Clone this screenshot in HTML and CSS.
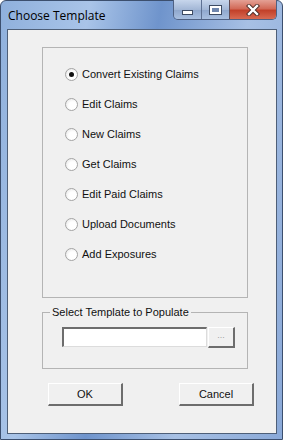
FILE: index.html
```html
<!DOCTYPE html>
<html lang="en">
<head>
  <meta charset="UTF-8">
  <title>Choose Template</title>
  <link rel="stylesheet" href="styles.css">
</head>
<body>
  <div class="window">
    <!-- title bar -->
    <div class="titlebar">
      <div class="title">Choose Template</div>
      <div class="caption-buttons">
        <div class="cap-btn cap-min"><span class="min-glyph"></span></div>
        <div class="cap-btn cap-max"><span class="max-glyph"></span></div>
        <div class="cap-btn cap-close">
          <svg width="14" height="12" viewBox="0 0 14 12">
            <path d="M3 2 L11 10 M11 2 L3 10" stroke="#4a2a25" stroke-width="4.2" stroke-linecap="square"/>
            <path d="M3 2 L11 10 M11 2 L3 10" stroke="#fff" stroke-width="2.4" stroke-linecap="square"/>
          </svg>
        </div>
      </div>
    </div>
    <!-- client area -->
    <div class="client">
      <div class="group options">
        <label class="radio-row"><span class="radio checked"></span>Convert Existing Claims</label>
        <label class="radio-row"><span class="radio"></span>Edit Claims</label>
        <label class="radio-row"><span class="radio"></span>New Claims</label>
        <label class="radio-row"><span class="radio"></span>Get Claims</label>
        <label class="radio-row"><span class="radio"></span>Edit Paid Claims</label>
        <label class="radio-row"><span class="radio"></span>Upload Documents</label>
        <label class="radio-row"><span class="radio"></span>Add Exposures</label>
      </div>
      <fieldset class="group template">
        <legend>Select Template to Populate</legend>
        <div class="file-row">
          <div class="textbox"></div>
          <div class="browse-btn">...</div>
        </div>
      </fieldset>
      <div class="button-row">
        <div class="btn">OK</div>
        <div class="btn">Cancel</div>
      </div>
    </div>
  </div>
</body>
</html>
```

FILE: styles.css
```css
body {
  margin: 0;
  background: #fff;
  font-family: "Liberation Sans", Arial, sans-serif;
  font-size: 11px;
  color: #111;
}
.window {
  width: 283px;
  height: 440px;
  box-sizing: border-box;
  border: 1px solid #3c4f6e;
  border-radius: 6px 6px 0 0;
  background: linear-gradient(100deg, #8fb0dc 0%, #a9c4e8 25%, #6f94cc 45%, #a7c0e4 70%, #8aa9d8 100%);
  display: flex;
  flex-direction: column;
}
/* title bar */
.titlebar {
  height: 28px;
  display: flex;
  justify-content: space-between;
  align-items: flex-start;
}
.title {
  font-family: "Open Sans", "DejaVu Sans", sans-serif;
  font-size: 12px;
  color: #000;
  padding: 6px 0 0 7px;
}
.caption-buttons {
  display: flex;
  margin-right: 5px;
  margin-top: -1px;
  border: 1px solid #4f6183;
  border-top: none;
  border-radius: 0 0 5px 5px;
  overflow: hidden;
  height: 19px;
}
.cap-btn {
  height: 19px;
  display: flex;
  align-items: center;
  justify-content: center;
  box-sizing: border-box;
}
.cap-min {
  width: 28px;
  background: linear-gradient(#c7d6ec, #a3b7d6 50%, #8ea6cc 51%, #a8bfe0);
  border-right: 1px solid #5e7193;
}
.cap-max {
  width: 28px;
  background: linear-gradient(#c7d6ec, #a3b7d6 50%, #8ea6cc 51%, #a8bfe0);
  border-right: 1px solid #5e4a52;
}
.cap-close {
  width: 46px;
  background: linear-gradient(#e4a195, #d26a58 45%, #c2412a 55%, #d86a52);
}
.min-glyph {
  width: 9px;
  height: 3px;
  background: #fff;
  border: 1px solid #3d4b63;
  margin-top: 5px;
}
.max-glyph {
  width: 7px;
  height: 4px;
  border: 2px solid #fff;
  outline: 1px solid #3d4b63;
  background: #6f86ad;
}
/* client area */
.client {
  flex: 1;
  margin: 0 5px 5px 6px;
  border: 1px solid #4e5f78;
  background: #f0f0f0;
  display: flex;
  flex-direction: column;
  align-items: flex-start;
}
.group {
  margin-left: 34px;
  width: 206px;
  box-sizing: border-box;
  border: 1px solid #b4b4b4;
}
.options {
  margin-top: 17px;
  height: 251px;
  padding: 19px 0 0 22px;
  display: flex;
  flex-direction: column;
  gap: 16px;
}
.radio-row {
  display: flex;
  align-items: center;
  gap: 4px;
  height: 14px;
}
.radio {
  width: 11px;
  height: 11px;
  border-radius: 50%;
  border: 1px solid #a4a4a4;
  background: radial-gradient(circle at 60% 60%, #ffffff 40%, #e0e0e0 100%);
  display: flex;
  align-items: center;
  justify-content: center;
}
.radio.checked::after {
  content: "";
  width: 5px;
  height: 5px;
  border-radius: 50%;
  background: #111;
}
.template {
  margin-top: 8px;
  margin-right: 0;
  padding: 9px 0 14px 19px;
  height: 63px;
}
.template legend {
  padding: 0 2px;
  margin-left: -12px;
}
.file-row {
  display: flex;
  gap: 1px;
}
.textbox {
  width: 145px;
  height: 20px;
  box-sizing: border-box;
  background: #fff;
  border-top: 2px solid #6d6d6d;
  border-left: 2px solid #6d6d6d;
  border-right: 1px solid #dcdcdc;
  border-bottom: 1px solid #dcdcdc;
}
.browse-btn {
  width: 27px;
  height: 21px;
  box-sizing: border-box;
  background: #f0f0f0;
  border-top: 1px solid #fff;
  border-left: 1px solid #fff;
  border-right: 2px solid #6d6d6d;
  border-bottom: 2px solid #6d6d6d;
  color: #a0a0a0;
  font-size: 9px;
  text-align: center;
  line-height: 14px;
}
.button-row {
  display: flex;
  gap: 56px;
  margin: 14px 0 0 40px;
}
.btn {
  width: 75px;
  height: 23px;
  box-sizing: border-box;
  background: #f0f0f0;
  border-top: 1px solid #fff;
  border-left: 1px solid #fff;
  border-right: 2px solid #6d6d6d;
  border-bottom: 2px solid #6d6d6d;
  display: flex;
  align-items: center;
  justify-content: center;
}
```
